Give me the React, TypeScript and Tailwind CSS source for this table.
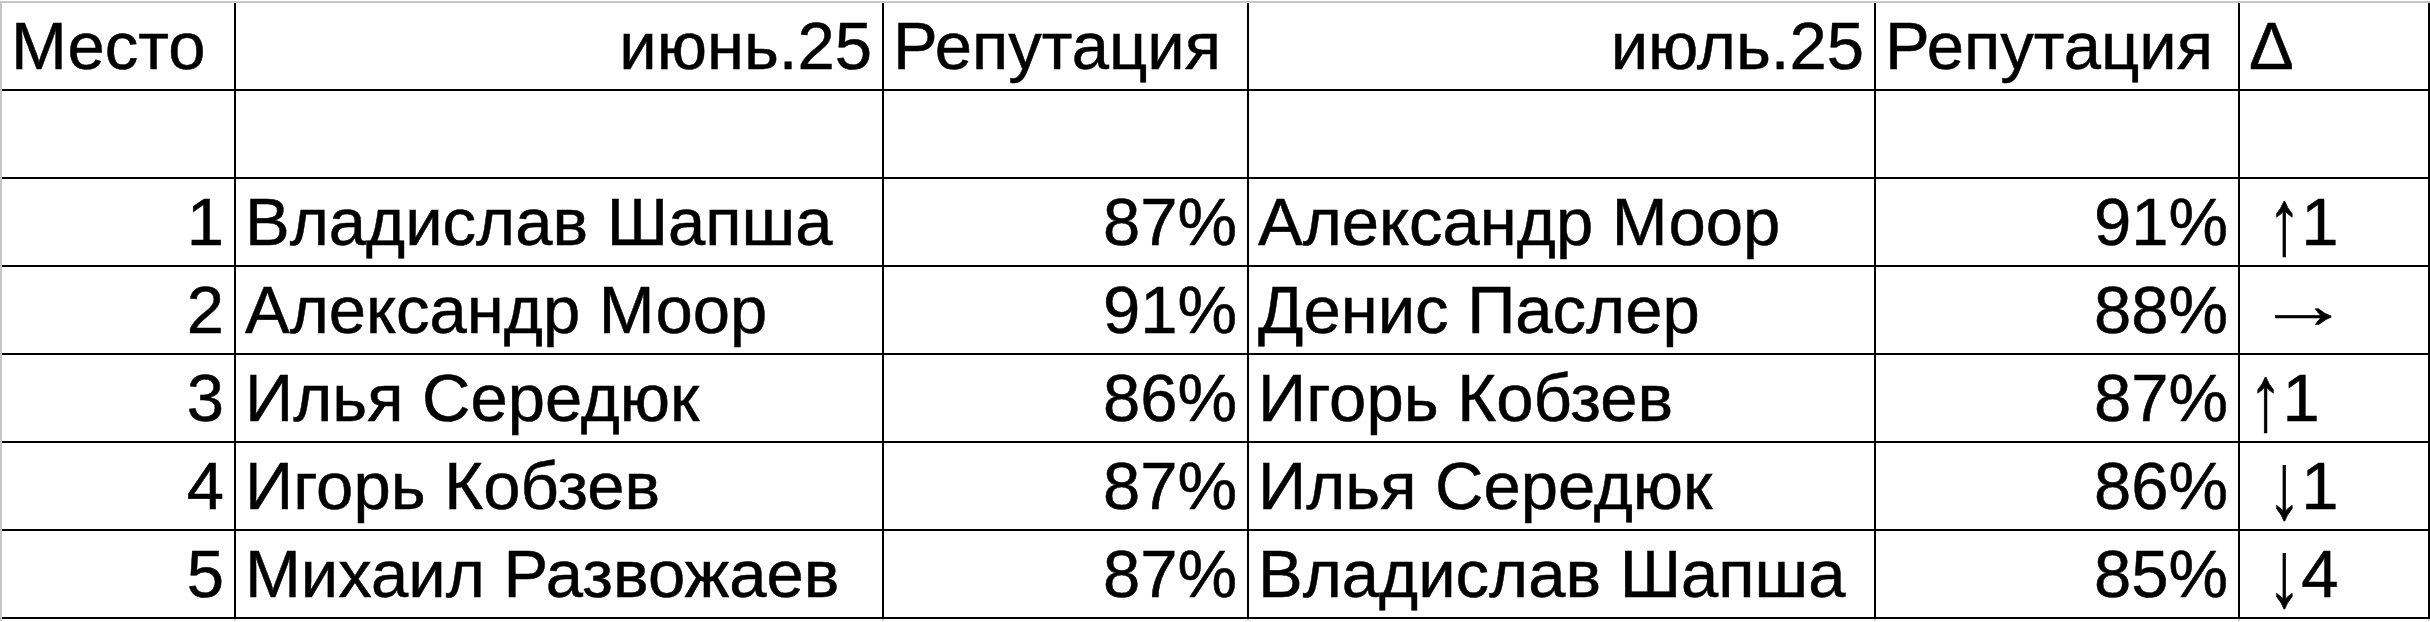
import React from "react";

const cols = [
  "w-[234px]",
  "w-[648px]",
  "w-[365px]",
  "w-[627px]",
  "w-[364px]",
  "w-[190px]",
];

type Align = "left" | "right";

const header: string[] = ["Место", "июнь.25", "Репутация", "июль.25", "Репутация", "Δ"];
const headerAligns: Align[] = ["left", "right", "left", "right", "left", "left"];
const aligns: Align[] = ["right", "left", "right", "left", "right", "left"];

// delta: [leading space?, arrow, number]
const rows: { cells: string[]; delta: [boolean, string, string] }[] = [
  { cells: ["1", "Владислав Шапша", "87%", "Александр Моор", "91%"], delta: [true, "↑", "1"] },
  { cells: ["2", "Александр Моор", "91%", "Денис Паслер", "88%"], delta: [true, "→", ""] },
  { cells: ["3", "Илья Середюк", "86%", "Игорь Кобзев", "87%"], delta: [false, "↑", "1"] },
  { cells: ["4", "Игорь Кобзев", "87%", "Илья Середюк", "86%"], delta: [true, "↓", "1"] },
  { cells: ["5", "Михаил Развожаев", "87%", "Владислав Шапша", "85%"], delta: [true, "↓", "4"] },
];

function Cell({ i, align, children }: { i: number; align: Align; children?: React.ReactNode }) {
  return (
    <div
      className={`${cols[i]} h-[88px] shrink-0 border-r-2 border-b-2 border-black flex items-end pb-[5px] pl-[9px] pr-[10px] whitespace-pre ${
        align === "right" ? "justify-end" : "justify-start"
      }`}
    >
      {children}
    </div>
  );
}

function Arrow({ ch }: { ch: string }) {
  if (ch === "→") {
    return (
      <span className="inline-block origin-left scale-x-140 -translate-x-[12px] -translate-y-[5px]">
        {ch}
      </span>
    );
  }
  return <span className="inline-block origin-bottom scale-y-140 translate-y-[15px]">{ch}</span>;
}

export default function App() {
  return (
    <div
      className="bg-white text-black w-[2430px] h-[622px] overflow-hidden text-[67px] leading-[1.117] [-webkit-text-stroke:0.5px_black]"
      style={{ fontFamily: '"Liberation Sans", Arial, sans-serif' }}
    >
      <div className="mt-px border-t-2 border-l-2 border-[#c6c6c6]">
        <div className="flex">
          {header.map((t, i) => (
            <Cell key={i} i={i} align={headerAligns[i]}>
              {t}
            </Cell>
          ))}
        </div>
        <div className="flex">
          {cols.map((_, i) => (
            <Cell key={i} i={i} align="left" />
          ))}
        </div>
        {rows.map((r, ri) => (
          <div key={ri} className="flex">
            {r.cells.map((t, i) => (
              <Cell key={i} i={i} align={aligns[i]}>
                {t}
              </Cell>
            ))}
            <Cell i={5} align="left">
              {r.delta[0] ? "\u00a0" : ""}
              <Arrow ch={r.delta[1]} />
              {r.delta[2]}
            </Cell>
          </div>
        ))}
        <div className="flex h-[2px]">
          {cols.map((w, i) => (
            <div key={i} className={`${w} shrink-0 h-full border-r-2 border-[#d0d0d0]`} />
          ))}
        </div>
      </div>
    </div>
  );
}
